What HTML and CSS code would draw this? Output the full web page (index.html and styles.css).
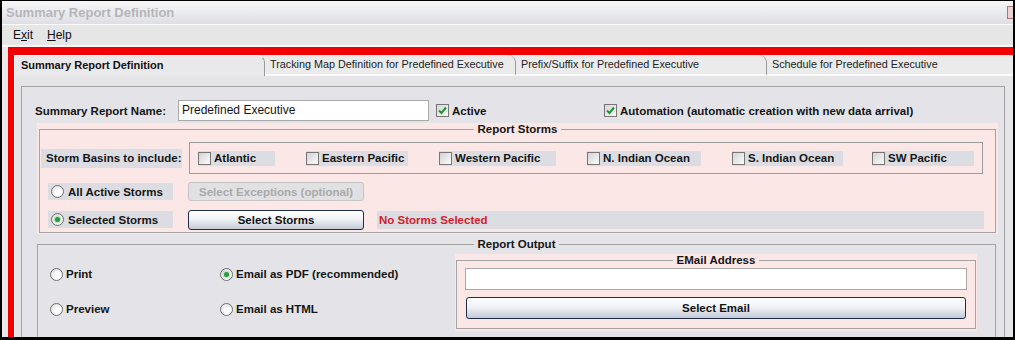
FILE: index.html
```html
<!DOCTYPE html>
<html lang="en">
<head>
  <meta charset="UTF-8" />
  <title>Summary Report Definition</title>
  <link rel="stylesheet" href="styles.css">
</head>
<body>
  <div class="window">
    <div class="titlebar">
      <span class="title">Summary Report Definition</span>
      <span class="close"></span>
    </div>
    <div class="menubar">
      <span class="menu">E<u>x</u>it</span>
      <span class="menu"><u>H</u>elp</span>
    </div>

    <div class="frame">
      <div class="tabs">
        <div class="tab active">Summary Report Definition</div>
        <div class="tab">Tracking Map Definition for Predefined Executive</div>
        <div class="tab">Prefix/Suffix for Predefined Executive</div>
        <div class="tab">Schedule for Predefined Executive</div>
      </div>

      <div class="tabpage">
        <div class="panel">
          <div class="name-row">
            <span class="name-label">Summary Report Name:</span>
            <div class="textbox">Predefined Executive</div>
            <span class="check active-check">
              <i class="box"><svg width="11" height="11" viewBox="0 0 11 11"><path d="M2 5.5 L4.5 8 L9 2.5" fill="none" stroke="#21962b" stroke-width="2"/></svg></i>Active
            </span>
            <span class="check">
              <i class="box"><svg width="11" height="11" viewBox="0 0 11 11"><path d="M2 5.5 L4.5 8 L9 2.5" fill="none" stroke="#21962b" stroke-width="2"/></svg></i>Automation (automatic creation with new data arrival)
            </span>
          </div>

          <div class="pink storms">
            <fieldset class="group">
              <legend>Report Storms</legend>
              <div class="basins-row">
                <span class="gray-label">Storm Basins to include:</span>
                <div class="basins">
                  <span class="basin w77"><i class="box"></i>Atlantic</span>
                  <span class="basin w102"><i class="box"></i>Eastern Pacific</span>
                  <span class="basin w117"><i class="box"></i>Western Pacific</span>
                  <span class="basin w114"><i class="box"></i>N. Indian Ocean</span>
                  <span class="basin w111"><i class="box"></i>S. Indian Ocean</span>
                  <span class="basin w102 last"><i class="box"></i>SW Pacific</span>
                </div>
              </div>
              <div class="radio-row first">
                <span class="radio-label"><i class="radio"></i>All Active Storms</span>
                <span class="btn disabled">Select Exceptions (optional)</span>
              </div>
              <div class="radio-row">
                <span class="radio-label"><i class="radio on"></i>Selected Storms</span>
                <span class="btn">Select Storms</span>
                <span class="status">No Storms Selected</span>
              </div>
            </fieldset>
          </div>

          <fieldset class="group output">
            <legend>Report Output</legend>
            <div class="output-row">
              <div class="radio-col">
                <span class="opt"><i class="radio"></i>Print</span>
                <span class="opt"><i class="radio"></i>Preview</span>
              </div>
              <div class="radio-col wide">
                <span class="opt"><i class="radio on"></i>Email as PDF (recommended)</span>
                <span class="opt"><i class="radio"></i>Email as HTML</span>
              </div>
              <div class="pink email">
                <fieldset class="group">
                  <legend>EMail Address</legend>
                  <div class="email-input"></div>
                  <span class="btn email-btn">Select Email</span>
                </fieldset>
              </div>
            </div>
          </fieldset>
        </div>
      </div>
    </div>
  </div>
</body>
</html>
```

FILE: styles.css
```css
* {
  box-sizing: border-box;
}

body {
  margin: 0;
  background: #000;
  font-family: "Liberation Sans", Arial, sans-serif;
  font-size: 11.5px;
  color: #151515;
  white-space: nowrap;
}

.window {
  margin: 1px 2px 0 2px;
  width: 1011px;
  height: 336px;
  background: #e8e8ea;
  overflow: hidden;
  display: flex;
  flex-direction: column;
}

.titlebar {
  flex: none;
  height: 24px;
  padding-left: 4px;
  display: flex;
  align-items: center;
  justify-content: space-between;
  background: linear-gradient(#f7f7f9, #dedfe4);
  border-bottom: 1px solid #fafafa;
}

.title {
  font-size: 13px;
  font-weight: bold;
  color: #b5b5ba;
}

.close {
  width: 6px;
  height: 13px;
  background: #ecd2d2;
  border: 1px solid #b47070;
  border-right: none;
}

.menubar {
  flex: none;
  height: 22px;
  padding-left: 11px;
  display: flex;
  align-items: center;
  gap: 14px;
  font-size: 12px;
  color: #111;
  background: #e6e6e6;
  border-bottom: 2px solid #f7f7f7;
}

.frame {
  flex: 1;
  margin-left: 6px;
  border-top: 8px solid #f20000;
  border-left: 6px solid #f20000;
  display: flex;
  flex-direction: column;
  background: #e5e5e8;
}

.tabs {
  flex: none;
  height: 21px;
  display: flex;
  background: #ebebeb;
  font-size: 10.8px;
}

.tab {
  flex: none;
  width: 251px;
  padding-left: 5px;
  line-height: 19px;
  color: #222;
  border-right: 1px solid #9a9a9a;
  border-top-right-radius: 9px 7px;
  border-bottom: 2px solid #fbfbfb;
}

.tab.active {
  font-size: 11px;
  font-weight: bold;
  color: #111;
  border-left: 1px solid #fff;
  border-top: 1px solid #fff;
  border-bottom: none;
  background: #e9e9ec;
  padding-left: 6px;
  line-height: 18px;
}

.tabpage {
  flex: 1;
  padding: 10px 0 0 6px;
  border-left: 1px solid #fff;
}

.panel {
  width: 984px;
  height: 260px;
  border: 1px solid #a2a2a6;
  border-bottom: none;
  background: #e4e4e8;
}

.name-row {
  display: flex;
  align-items: center;
  padding: 13px 0 0 13px;
  height: 34px;
  font-weight: bold;
}

.name-label {
  width: 143px;
}

.textbox {
  width: 251px;
  height: 21px;
  padding-left: 3px;
  line-height: 19px;
  font-size: 12px;
  font-weight: normal;
  background: #fff;
  border: 1px solid #a9a9a9;
}

.check {
  display: flex;
  align-items: center;
  gap: 3px;
}

.active-check {
  margin-left: 7px;
  width: 168px;
}

.box {
  display: block;
  flex: none;
  width: 13px;
  height: 13px;
  border: 1px solid #767676;
  background: linear-gradient(135deg, #d4d4d8, #fbfbfb);
}

.box svg {
  display: block;
}

.pink {
  background: #fce7e7;
}

.storms {
  margin: 2px 6px 0 15px;
  padding: 0 2px 1px 2px;
}

.group {
  margin: 0;
  padding: 0;
  border: 1px solid #a3a3a3;
  min-width: 0;
}

.group legend {
  margin: 0 auto;
  padding: 0 4px;
  font-weight: bold;
  line-height: 13px;
}

.basins-row {
  display: flex;
  align-items: center;
  margin-top: 6px;
  font-weight: bold;
}

.gray-label {
  flex: none;
  margin-left: 1px;
  width: 141px;
  height: 19px;
  padding-left: 5px;
  line-height: 19px;
  background: #dcdde3;
}

.basins {
  flex: none;
  margin-left: 7px;
  width: 794px;
  height: 32px;
  padding-left: 8px;
  display: flex;
  align-items: center;
  gap: 31px;
  border: 1px solid #9c9c9c;
}

.basin {
  flex: none;
  height: 15px;
  display: flex;
  align-items: center;
  gap: 3px;
  background: #dcdde3;
}

.basin.last {
  margin-left: -2px;
}

.w77 { width: 77px; }
.w102 { width: 102px; }
.w111 { width: 111px; }
.w114 { width: 114px; }
.w117 { width: 117px; }

.radio-row {
  display: flex;
  align-items: center;
  margin-top: 9px;
  margin-bottom: 3px;
  height: 19px;
  font-weight: bold;
}

.radio-row.first {
  margin-top: 8px;
  margin-bottom: 0;
}

.radio-label {
  flex: none;
  margin-left: 8px;
  width: 125px;
  height: 17px;
  padding-left: 3px;
  display: flex;
  align-items: center;
  gap: 4px;
  background: #dcdde3;
}

.radio {
  display: block;
  flex: none;
  width: 13px;
  height: 13px;
  border-radius: 50%;
  border: 1px solid #6f6f6f;
  background: radial-gradient(circle at 65% 65%, #ffffff 30%, #d6d6da 100%);
  position: relative;
}

.radio.on::after {
  content: "";
  position: absolute;
  left: 3px;
  top: 3px;
  width: 5px;
  height: 5px;
  border-radius: 50%;
  background: #2b9c3a;
  box-shadow: 0 0 2px 1px #9fd8a6;
}

.btn {
  display: block;
  flex: none;
  margin-left: 15px;
  width: 176px;
  height: 20px;
  line-height: 18px;
  text-align: center;
  font-weight: bold;
  color: #111;
  border: 1px solid #1f2d4a;
  border-radius: 3px;
  background: linear-gradient(#ffffff, #f0f2f6 45%, #c4cad8);
}

.btn.disabled {
  height: 19px;
  color: #a9a9a9;
  border-color: #c6c6c6;
  background: #e1e1e3;
}

.status {
  flex: 1;
  margin: 0 11px 0 13px;
  height: 18px;
  line-height: 18px;
  padding-left: 2px;
  color: #d4202a;
  background: #dcdde3;
}

.output {
  margin: 4px 8px 0 15px;
  height: 120px;
}

.output-row {
  display: flex;
  font-weight: bold;
}

.radio-col {
  flex: none;
  margin-left: 12px;
  width: 170px;
  padding-top: 16px;
  display: flex;
  flex-direction: column;
  gap: 21px;
}

.radio-col.wide {
  margin-left: 0;
  width: 235px;
}

.opt {
  display: flex;
  align-items: center;
  gap: 3px;
  height: 14px;
}

.email {
  flex: none;
  margin-top: 3px;
  width: 522px;
  padding: 0 1px 2px 1px;
}

.email .group {
  padding-bottom: 9px;
}

.email-input {
  margin: 1px 0 0 8px;
  width: 502px;
  height: 22px;
  background: #fff;
  border: 1px solid #a9a9a9;
}

.email-btn {
  margin: 7px 0 0 9px;
  width: 500px;
  height: 22px;
  line-height: 20px;
}
```
